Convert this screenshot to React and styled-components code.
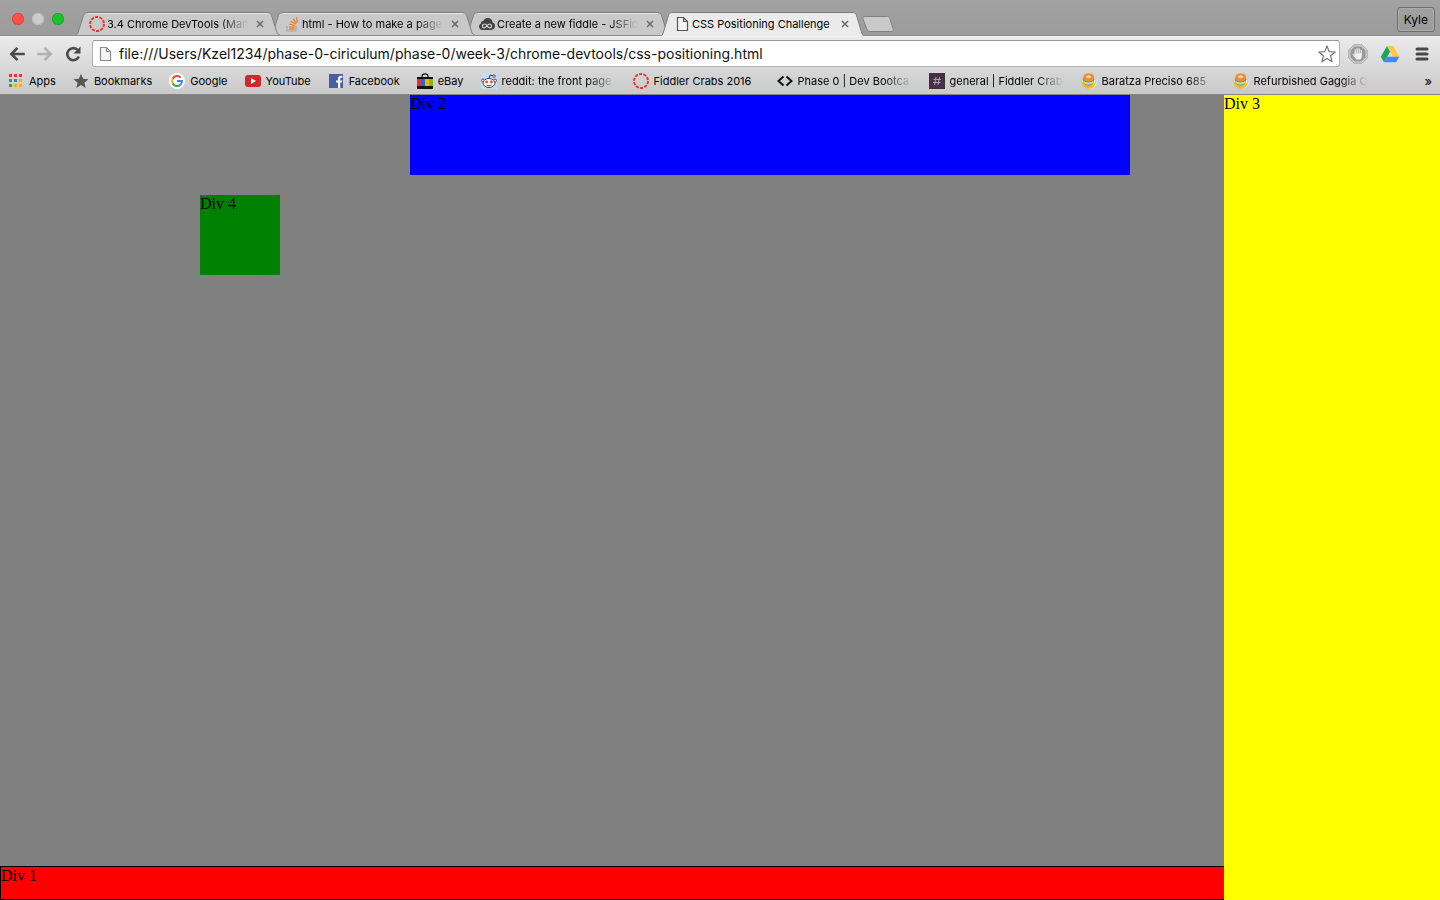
import React from "react";
import styled, { createGlobalStyle, css } from "styled-components";

const GlobalStyle = createGlobalStyle`
  *, *::before, *::after { box-sizing: border-box; }
  body { margin: 0; background: #808080; }
  button { appearance: none; border: 0; padding: 0; background: none; color: inherit; font: inherit; cursor: pointer; }
  svg { display: block; flex: none; }
`;

const ui = '"Inter", "Liberation Sans", sans-serif';

const Window = styled.div`
  display: flex;
  flex-direction: column;
  min-height: 100vh;
`;

/* ---------- Tab strip ---------- */

const TabStrip = styled.header`
  display: flex;
  align-items: flex-end;
  height: 35px;
  background: linear-gradient(#a2a2a2, #9c9c9c);
  font-family: ${ui};
`;

const WindowControls = styled.div`
  display: flex;
  align-self: flex-start;
  gap: 8px;
  width: 76px;
  padding: 13px 0 0 12px;
`;

const Light = styled.button`
  width: 12px;
  height: 12px;
  border-radius: 50%;
  background: ${(p) => p.$color};
  box-shadow: inset 0 0 0 1px ${(p) => p.$ring};
`;

const Tabs = styled.nav`
  display: flex;
  align-items: flex-end;
`;

const TabShell = styled.div`
  --fill: ${(p) => (p.$active ? "#ebebeb" : "#c9c9c9")};
  position: relative;
  z-index: ${(p) => p.$level};
  display: flex;
  width: 204px;
  height: ${(p) => (p.$active ? 24 : 23)}px;
  margin-right: -9px;
  margin-bottom: ${(p) => (p.$active ? -1 : 0)}px;
`;

const TabBody = styled.div`
  flex: 1;
  min-width: 0;
  display: flex;
  align-items: center;
  gap: 2px;
  height: 100%;
  padding: 0 0 ${(p) => (p.$active ? 1 : 0)}px 1px;
  background: var(--fill);
  border-top: 1px solid #808080;
  box-shadow: inset 0 1px 0 #e6e6e6;
`;

const fade = css`
  mask-image: linear-gradient(to right, #000 calc(100% - 28px), transparent);
`;

const TabTitle = styled.button`
  flex: 1;
  min-width: 0;
  overflow: hidden;
  white-space: nowrap;
  text-align: left;
  font-size: 11px;
  line-height: 16px;
  color: #000;
  ${(p) => p.$fade && fade}
`;

const TabClose = styled.button`
  display: grid;
  place-items: center;
  width: 16px;
  height: 16px;
  margin-left: 2px;
`;

const NewTab = styled.button`
  margin: 0 0 3px 6px;
`;

const Profile = styled.button`
  align-self: flex-start;
  height: 25px;
  margin: 7px 5px 0 auto;
  padding: 0 6px;
  border: 1px solid #6f6f6f;
  border-radius: 3px;
  box-shadow: inset 0 0 0 1px #ababab;
  font-size: 12px;
  line-height: 23px;
`;

/* ---------- Toolbar and bookmarks ---------- */

const Chrome = styled.div`
  border-top: 1px solid #8c8c8c;
  border-bottom: 1px solid #858585;
  background: linear-gradient(#ebebeb, #c9c9c9);
  box-shadow: inset 0 1px 0 #f2f2f2;
  font-family: ${ui};
`;

const Toolbar = styled.div`
  display: flex;
  align-items: center;
  height: 35px;
  padding: 0 2px 0 3px;
`;

const IconButton = styled.button`
  display: grid;
  place-items: center;
  width: ${(p) => p.$width || 28}px;
  height: 28px;
`;

const AddressBar = styled.form`
  flex: 1;
  display: flex;
  align-items: center;
  height: 27px;
  margin: 0 2px 0 5px;
  padding: 0 3px 0 4px;
  gap: 6px;
  background: #fff;
  border: 1px solid #b0b0b0;
  border-top-color: #979797;
  border-radius: 3px;
`;

const AddressInput = styled.input`
  flex: 1;
  min-width: 0;
  height: 20px;
  padding: 0;
  border: 0;
  outline: 0;
  background: transparent;
  color: #111;
  font: 14px/20px ${ui};
`;

const BookmarkBar = styled.nav`
  display: flex;
  align-items: center;
  height: 23px;
  padding: 0 8px 3px 8px;
`;

const Bookmark = styled.a`
  display: flex;
  align-items: center;
  gap: 5px;
  margin-right: 17px;
  color: #000;
  text-decoration: none;
`;

const BookmarkLabel = styled.span`
  min-width: ${(p) => p.$minWidth || 0}px;
  max-width: 114px;
  overflow: hidden;
  white-space: nowrap;
  font-size: 11px;
  line-height: 16px;
  ${(p) => p.$fade && fade}
`;

const Overflow = styled.button`
  margin-left: auto;
  font-size: 13px;
  line-height: 16px;
`;

/* ---------- Page ---------- */

const Page = styled.main`
  flex: 1;
  display: grid;
  grid-template-columns: 1fr 15%;
  background: #808080;
  color: #000;
  font: 16px/18px "Liberation Serif", "Times New Roman", serif;
`;

const Main = styled.div`
  display: flex;
  flex-direction: column;
  min-width: 0;
`;

const DivOne = styled.div`
  height: 34px;
  margin-top: auto;
  background: #f00;
  border: 1px solid #000;
  border-right: 0;
`;

const DivTwo = styled.div`
  width: 50vw;
  height: 80px;
  margin-left: 410px;
  background: #00f;
`;

const DivThree = styled.div`
  background: #ff0;
`;

const DivFour = styled.div`
  width: 80px;
  height: 80px;
  margin: 20px 0 0 200px;
  background: #008000;
`;

/* ---------- Icons ---------- */

const Svg = ({ w = 16, h = 16, children }) => (
  <svg width={w} height={h} viewBox={`0 0 ${w} ${h}`} fill="none" aria-hidden="true">{children}</svg>
);

const RingIcon = () => (
  <Svg><circle cx="8" cy="8" r="7" stroke="#e23b30" strokeWidth="2" strokeDasharray="3.1 1.3" /></Svg>
);

const StackIcon = () => (
  <Svg>
    <path d="M3 10v5h9v-5" stroke="#a5a5a5" strokeWidth="1.2" />
    <path d="M5 13h5.5M5 10.8l5.6.5M5.4 8.2l5.4 1.5M6.8 5.3l4.8 3M9.2 2.8l3.3 4.5M12.3 1.2l1.2 5.2" stroke="#f48024" strokeWidth="1.3" />
  </Svg>
);

const FiddleIcon = () => (
  <Svg>
    <path d="M3.8 14C1.600 14 0 12.500 0 10.500c0-1.400.8-2.500 2-3C1.800 5.800 3 4.800 4.300 5 5 3 6.800 2 8.800 2c2.700 0 4.600 2 4.800 4.600 1.400.5 2.400 1.800 2.400 3.500 0 2.200-1.700 3.900-3.900 3.900z" fill="#414141" />
    <path d="M8 9.500C7 8.400 6.200 8 5.400 8a1.900 1.900 0 000 3.800C7.400 11.800 8.600 8 10.600 8a1.900 1.900 0 010 3.800c-.8 0-1.600-.5-2.600-1.600" stroke="#d5d5d5" strokeWidth="1.200" />
  </Svg>
);

const FileIcon = ({ color = "#555" }) => (
  <Svg><path d="M3.500 1.500h6l4 4v9h-10zM9.500 1.500v4h4" stroke={color} fill="#f5f5f5" strokeWidth="1.200" /></Svg>
);

const AppsIcon = () => (
  <Svg>
    {["#e8382d", "#e8382d", "#e8382d", "#2b9f54", "#2f7de1", "#f5ae19", "#2b9f54", "#f5ae19", "#f5ae19"].map((c, i) => (
      <rect key={i} x={1 + (i % 3) * 5} y={1 + Math.floor(i / 3) * 5} width="3" height="3" fill={c} />
    ))}
  </Svg>
);

const StarIcon = () => (
  <Svg><path d="M8 .8l2.100 5 5.400.4-4.100 3.500 1.300 5.300L8 12.100 3.300 15l1.300-5.300L.5 6.200l5.400-.4z" fill="#575757" /></Svg>
);

const GoogleIcon = () => (
  <Svg>
    <circle cx="8" cy="8" r="8" fill="#fff" />
    <path d="M11.700 4.600A5 5 0 003.600 5.800" stroke="#ea4335" strokeWidth="2" />
    <path d="M3.600 5.800a5 5 0 000 4.400" stroke="#fbbc05" strokeWidth="2" />
    <path d="M3.600 10.200a5 5 0 007.800 1.600" stroke="#34a853" strokeWidth="2" />
    <path d="M11.400 11.800A5 5 0 0013 8H8" stroke="#4285f4" strokeWidth="2" />
  </Svg>
);

const YouTubeIcon = () => (
  <Svg><rect y="2" width="16" height="12" rx="3" fill="#d4252a" /><path d="M6 5l5 3-5 3z" fill="#fff" /></Svg>
);

const FacebookIcon = () => (
  <Svg>
    <rect x="1" y="1" width="14" height="14" fill="#4760a5" />
    <path d="M10 15V9.500H8v-2h2V6c0-2.200 1.200-3.300 3-3.300h1.300v2h-1c-.9 0-1.100.5-1.100 1.200v1.600h2l-.3 2h-1.700V15z" fill="#fff" />
  </Svg>
);

const EbayIcon = () => (
  <Svg>
    <path d="M5 6V3.500C5 1.800 6.200.8 8 .8s3 1 3 2.700V6" stroke="#111" strokeWidth="1.200" />
    <path d="M0 4h16v12H0z" fill="#111" />
    <path d="M0 6h4v7H0z" fill="#e62f35" /><path d="M4 6h4v7H4z" fill="#1670d6" />
    <path d="M8 6h4v7H8z" fill="#f6b015" /><path d="M12 6h4v7h-4z" fill="#80b618" />
  </Svg>
);

const RedditIcon = () => (
  <Svg>
    <rect width="16" height="16" fill="#c3defa" />
    <path d="M8 6l1-4 3 .7" stroke="#333" />
    <circle cx="13" cy="3" r="1.300" fill="#fff" stroke="#333" strokeWidth=".8" />
    <circle cx="2" cy="7.500" r="1.500" fill="#fff" stroke="#333" strokeWidth=".8" />
    <circle cx="14" cy="7.500" r="1.500" fill="#fff" stroke="#333" strokeWidth=".8" />
    <ellipse cx="8" cy="10" rx="6" ry="4.500" fill="#fff" stroke="#333" strokeWidth=".9" />
    <circle cx="5.600" cy="9" r="1.400" fill="#f0442a" /><circle cx="10.400" cy="9" r="1.400" fill="#f0442a" />
    <path d="M5.500 12c1.500 1 3.500 1 5 0" stroke="#333" strokeWidth=".9" />
  </Svg>
);

const CodeIcon = () => (
  <Svg><path d="M6.500 3.500L1.500 8l5 4.500M9.500 3.500l5 4.500-5 4.500" stroke="#111" strokeWidth="2" /></Svg>
);

const SlackIcon = () => (
  <Svg>
    <rect width="16" height="16" fill="#453145" />
    <path d="M7 4L5.500 12M10.500 4L9 12M4.500 6.500h7.500M4 9.500h7.500" stroke="#b39fb3" />
  </Svg>
);

const CupIcon = () => (
  <Svg>
    <ellipse cx="8.500" cy="9" rx="7.500" ry="6.500" fill="#f7f5ee" />
    <path d="M12.500 5.500c3.500 0 3.500 5-.5 6" stroke="#cfd0cc" strokeWidth="1.300" />
    <path d="M.8 8.500C.8 13 3.500 15.700 7.500 15.700s6.800-2.300 7-5.700c-3 2-10.500 2-13.700-1.500z" fill="#f2bd20" />
    <path d="M1.500 5.500c0 4.500 2.500 7 6 7s5.800-2.500 6-7z" fill="#3c9fc9" />
    <path d="M2 7.500c2.500 2.500 8.500 2.500 11 0-.5 2.500-2 4-5.500 4S2.500 10 2 7.500z" fill="#f5d460" />
    <ellipse cx="7.700" cy="4.500" rx="5.500" ry="4.200" fill="#ee8d32" />
    <path d="M4.800 4c1-2.200 4.500-2.200 5.700 0-1 1.700-4.500 1.700-5.700 0z" fill="#f9cf93" />
  </Svg>
);

const BackIcon = ({ color }) => (
  <Svg w={18} h={18}><path d="M9.500 2.800L3.300 9l6.200 6.200M3.500 9h13.300" stroke={color} strokeWidth="2.600" /></Svg>
);

const ForwardIcon = ({ color }) => (
  <Svg w={18} h={18}><path d="M8.500 2.800L14.700 9l-6.200 6.200M14.500 9H1.200" stroke={color} strokeWidth="2.600" /></Svg>
);

const ReloadIcon = () => (
  <Svg w={18} h={18}>
    <path d="M14.800 11.500a6 6 0 11-1.300-6.600" stroke="#4b4b4b" strokeWidth="2.600" />
    <path d="M16.500 1.500v7h-7z" fill="#4b4b4b" />
  </Svg>
);

const FavoriteIcon = () => (
  <Svg w={18} h={18}><path d="M9 1l2.200 5.600 6 .4-4.600 3.900 1.500 5.900L9 13.500l-5.100 3.300 1.500-5.900L.8 7l6-.4z" fill="#fff" stroke="#747474" strokeWidth="1.200" strokeLinejoin="round" /></Svg>
);

const BlockIcon = () => (
  <Svg w={20} h={20}>
    <path d="M6 .8h8L19.200 6v8L14 19.200H6L.8 14V6z" fill="#d2d2d2" stroke="#a6a6a6" />
    <path d="M6.500 2.500h7l4 4v7l-4 4h-7l-4-4v-7z" fill="#999" />
    <path d="M7.200 10V5.800M9.200 9V4.500M11.200 9V4.800M13.200 10V6.300M5.200 10.300l2.300 3.200" stroke="#f0f0f0" strokeWidth="1.200" strokeLinecap="round" />
    <path d="M6.600 9.300h7.200v3.200c0 2-1.200 3.300-3.400 3.300s-3.100-1.300-3.800-3.300z" fill="#f0f0f0" />
  </Svg>
);

const DriveIcon = () => (
  <Svg w={20} h={18}>
    <path d="M7 1L.8 11.800 4 17.200l6.200-10.800z" fill="#1da362" />
    <path d="M7 1h6.300l6 10.800H13z" fill="#fdc941" />
    <path d="M7.200 11.800h12.100l-3.200 5.400H4z" fill="#4687f4" />
  </Svg>
);

const MenuIcon = () => (
  <Svg w={14} h={14}><path d="M2 2h10M2 7h10M2 12h10" stroke="#484848" strokeWidth="3" strokeLinecap="round" /></Svg>
);

const CloseIcon = () => (
  <Svg w={8} h={8}><path d="M1 1l6 6M7 1L1 7" stroke="#6a6a6a" strokeWidth="1.500" /></Svg>
);

const NewTabShape = () => (
  <Svg w={32} h={16}>
    <path d="M3 .5h22.500c1 0 1.800.5 2.200 1.500l3.500 11c.4 1.400-.2 2.500-1.700 2.500H8c-1.500 0-2.500-.6-3-2L1 3C.5 1.500 1.200.5 3 .5z" fill="#c9c9c9" stroke="#818181" />
  </Svg>
);

const LeftEdge = () => (
  <svg width="12" height="100%" viewBox="0 0 12 24" preserveAspectRatio="none" aria-hidden="true">
    <path d="M0 24C1.200 23.500 1.600 22.500 2.200 21L7.500 3.500C8.200 1.300 9.500 0 12 0v24z" fill="var(--fill)" />
    <path d="M0 24C1.200 23.500 1.600 22.500 2.200 21L7.500 3.500C8.200 1.300 9.500 .5 12 .5" fill="none" stroke="#808080" />
  </svg>
);

const RightEdge = () => (
  <svg width="12" height="100%" viewBox="0 0 12 24" preserveAspectRatio="none" aria-hidden="true">
    <path d="M12 24C10 23.500 9.400 22.500 8.800 21L3.500 3.500C2.800 1.300 1.500 0 0 0v24z" fill="var(--fill)" />
    <path d="M12 24C10 23.500 9.400 22.500 8.800 21L3.500 3.500C2.800 1.300 1.500 .5 0 .5" fill="none" stroke="#808080" />
  </svg>
);

/* ---------- Data ---------- */

const tabs = [
  { title: "3.4 Chrome DevTools (Man", Icon: RingIcon, fade: true },
  { title: "html - How to make a page", Icon: StackIcon, fade: true },
  { title: "Create a new fiddle - JSFid", Icon: FiddleIcon, fade: true },
  { title: "CSS Positioning Challenge", Icon: FileIcon, active: true },
];

const bookmarks = [
  { label: "Apps", Icon: AppsIcon },
  { label: "Bookmarks", Icon: StarIcon },
  { label: "Google", Icon: GoogleIcon },
  { label: "YouTube", Icon: YouTubeIcon },
  { label: "Facebook", Icon: FacebookIcon },
  { label: "eBay", Icon: EbayIcon },
  { label: "reddit: the front page", Icon: RedditIcon, fade: true, minWidth: 114 },
  { label: "Fiddler Crabs 2016", Icon: RingIcon, minWidth: 106 },
  { label: "Phase 0 | Dev Bootca", Icon: CodeIcon, fade: true, minWidth: 114 },
  { label: "general | Fiddler Crab", Icon: SlackIcon, fade: true, minWidth: 114 },
  { label: "Baratza Preciso 685", Icon: CupIcon, fade: true, minWidth: 114 },
  { label: "Refurbished Gaggia C", Icon: CupIcon, fade: true, minWidth: 114 },
];

function Tab({ title, Icon, active, fade: faded, level }) {
  return (
    <TabShell $active={active} $level={level}>
      <LeftEdge />
      <TabBody $active={active}>
        <Icon />
        <TabTitle $fade={faded}>{title}</TabTitle>
        <TabClose aria-label={`Close ${title}`}><CloseIcon /></TabClose>
      </TabBody>
      <RightEdge />
    </TabShell>
  );
}

export default function App() {
  return (
    <Window>
      <GlobalStyle />
      <TabStrip>
        <WindowControls>
          <Light aria-label="Close window" $color="#ff5149" $ring="#e2463f" />
          <Light aria-label="Minimize window" $color="#cdcdcd" $ring="#bcbcbc" />
          <Light aria-label="Zoom window" $color="#1dc22f" $ring="#18ab29" />
        </WindowControls>
        <Tabs aria-label="Tabs">
          {tabs.map((t, i) => (
            <Tab key={t.title} {...t} level={t.active ? 10 : 5 - i} />
          ))}
        </Tabs>
        <NewTab aria-label="New tab"><NewTabShape /></NewTab>
        <Profile>Kyle</Profile>
      </TabStrip>

      <Chrome>
        <Toolbar>
          <IconButton aria-label="Back"><BackIcon color="#4b4b4b" /></IconButton>
          <IconButton aria-label="Forward"><ForwardIcon color="#b2b2b2" /></IconButton>
          <IconButton aria-label="Reload"><ReloadIcon /></IconButton>
          <AddressBar onSubmit={(e) => e.preventDefault()}>
            <FileIcon color="#8a8a8a" />
            <AddressInput
              aria-label="Address"
              defaultValue="file:///Users/Kzel1234/phase-0-ciriculum/phase-0/week-3/chrome-devtools/css-positioning.html"
            />
            <IconButton type="button" $width={18} aria-label="Bookmark this page"><FavoriteIcon /></IconButton>
          </AddressBar>
          <IconButton $width={32} aria-label="Ad blocker"><BlockIcon /></IconButton>
          <IconButton $width={32} aria-label="Drive"><DriveIcon /></IconButton>
          <IconButton $width={32} aria-label="Menu"><MenuIcon /></IconButton>
        </Toolbar>
        <BookmarkBar aria-label="Bookmarks">
          {bookmarks.map(({ label, Icon, fade: faded, minWidth }) => (
            <Bookmark key={label} href="#">
              <Icon />
              <BookmarkLabel $fade={faded} $minWidth={minWidth}>{label}</BookmarkLabel>
            </Bookmark>
          ))}
          <Overflow aria-label="More bookmarks">»</Overflow>
        </BookmarkBar>
      </Chrome>

      <Page>
        <Main>
          <DivTwo>Div 2</DivTwo>
          <DivFour>Div 4</DivFour>
          <DivOne>Div 1</DivOne>
        </Main>
        <DivThree>Div 3</DivThree>
      </Page>
    </Window>
  );
}
